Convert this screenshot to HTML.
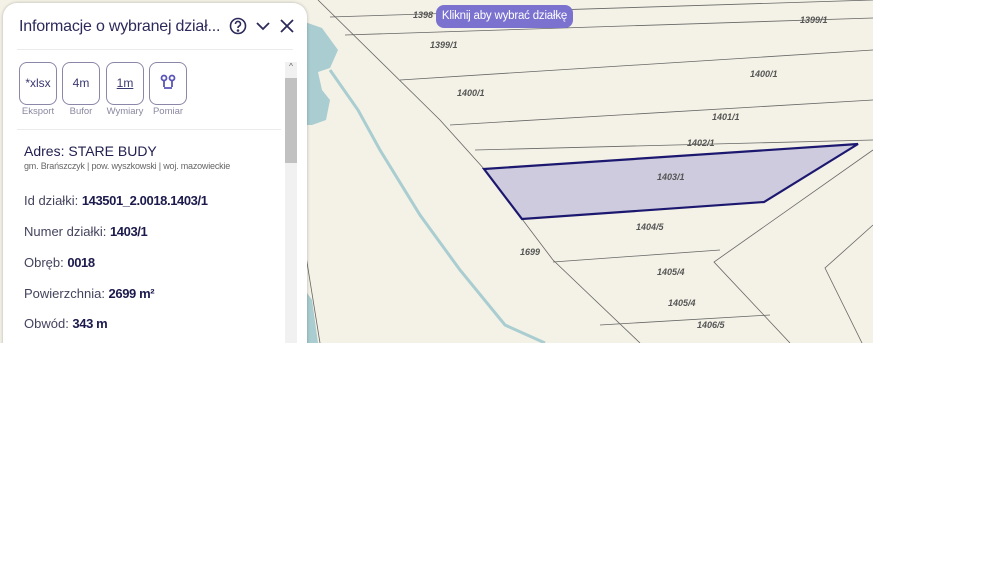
<!DOCTYPE html>
<html><head><meta charset="utf-8"><style>
body{margin:0;width:1000px;height:563px;background:#fff;overflow:hidden;font-family:"Liberation Sans",sans-serif;position:relative}
#map{position:absolute;left:0;top:0;width:873px;height:343px;background:#f4f2e6;overflow:hidden}
#panel{position:absolute;left:3px;top:3px;width:304px;height:345px;background:#fff;border-radius:14px 14px 0 0;box-shadow:0 0 3px rgba(0,0,0,.25);color:#2c2a5a}
.t{position:absolute;left:16px;top:15px;font-size:16px;color:#2c2a5a;letter-spacing:-0.2px;white-space:nowrap}
.btn{position:absolute;top:59px;width:36px;height:41px;border:1px solid #8a87a8;border-radius:8px;font-size:12px;text-align:center;line-height:41px;color:#3a3870}
.lbl{position:absolute;top:103px;font-size:9.5px;color:#8a88a0;width:50px;text-align:center}
.row{position:absolute;left:21px;font-size:13px;color:#44435e;white-space:nowrap}
.row b{color:#1c1a4c;font-weight:600;letter-spacing:-0.4px}
</style></head><body>
<div id="map">
<svg width="873" height="343" viewBox="0 0 873 343">
<path d="M305 22 L322 28 L338 50 L330 68 L318 72 L322 90 L330 100 L326 120 L312 125 L305 125 Z" fill="#a9cdd0"/>
<path d="M305 290 L312 300 L318 343 L305 343 Z" fill="#a9cdd0"/>
<path d="M330 70 L358 110 L380 150 L420 215 L460 270 L505 325 L545 343" fill="none" stroke="#a9cdd0" stroke-width="3"/>
<g stroke="#666" stroke-width="0.8" fill="none">
<path d="M318 0 L440 120 L485 170 L522 219 L553 260 L640 343"/>
<path d="M330 17 L873 0"/><path d="M345 35 L873 18"/>
<path d="M400 80 L873 50"/><path d="M450 125 L873 100"/><path d="M475 150 L873 140"/>
<path d="M553 262 L720 250"/><path d="M600 325 L770 315"/>
<path d="M873 150 L714 262 L790 343"/><path d="M873 225 L825 268 L862 343"/>
<path d="M305 250 L320 343"/>
</g>
<polygon points="484,169 858,144 764,202 522,219" fill="#cdcbdd" stroke="#1c1870" stroke-width="2.2"/>
<g font-size="9" font-style="italic" font-weight="bold" fill="#555">
<text x="413" y="18">1398</text><text x="430" y="48">1399/1</text><text x="800" y="23">1399/1</text>
<text x="457" y="96">1400/1</text><text x="750" y="77">1400/1</text><text x="712" y="120">1401/1</text>
<text x="687" y="146">1402/1</text><text x="657" y="180">1403/1</text><text x="636" y="230">1404/5</text>
<text x="520" y="255">1699</text><text x="657" y="275">1405/4</text><text x="668" y="306">1405/4</text><text x="697" y="328">1406/5</text>
</g>
</svg>
<div style="position:absolute;left:436px;top:5px;width:137px;height:23px;border-radius:8px;background:#7b72d0;color:#fff;font-size:11.5px;line-height:23px;text-align:center;white-space:nowrap;letter-spacing:-0.2px">Kliknij aby wybrać działkę</div>
</div>
<div id="panel">
<div class="t">Informacje o wybranej dział...</div>
<svg style="position:absolute;left:226px;top:14px" width="18" height="18" viewBox="0 0 18 18" fill="none" stroke="#2c2a5a" stroke-width="1.6"><circle cx="9" cy="9" r="7.5"/><path d="M6.5 7a2.5 2.5 0 1 1 3.5 2.2c-.8.4-1 .9-1 1.8"/><circle cx="9" cy="13.5" r=".5" fill="#2c2a5a"/></svg>
<svg style="position:absolute;left:253px;top:18px" width="14" height="10" viewBox="0 0 14 10" fill="none" stroke="#2c2a5a" stroke-width="1.8"><path d="M1 2l6 6 6-6"/></svg>
<svg style="position:absolute;left:277px;top:16px" width="14" height="14" viewBox="0 0 14 14" fill="none" stroke="#2c2a5a" stroke-width="1.8"><path d="M1 1l12 12M13 1L1 13"/></svg>
<div style="position:absolute;left:14px;right:14px;top:46px;border-top:1px solid #ebebeb"></div>
<div class="btn" style="left:16px">*xlsx</div>
<div class="btn" style="left:59px">4m</div>
<div class="btn" style="left:103px"><span style="text-decoration:underline">1m</span></div>
<div class="btn" style="left:146px"><svg width="16" height="18" viewBox="0 0 16 18" style="margin-top:11px" fill="none" stroke="#5a54b8" stroke-width="1.8"><circle cx="4" cy="4" r="2.5"/><circle cx="12" cy="4" r="2.5"/><path d="M4 7v6M12 7v6M4 14h8"/></svg></div>
<div class="lbl" style="left:10px">Eksport</div><div class="lbl" style="left:53px">Bufor</div><div class="lbl" style="left:97px">Wymiary</div><div class="lbl" style="left:140px">Pomiar</div>
<div style="position:absolute;left:14px;right:26px;top:126px;border-top:1px solid #ebebeb"></div>
<div style="position:absolute;left:282px;top:59px;width:12px;height:290px;background:#f1f1f1"><div style="font-size:8px;text-align:center;color:#555">^</div><div style="position:absolute;top:16px;width:12px;height:85px;background:#c1c1c1"></div></div>
<div class="row" style="top:140px;font-size:14px;color:#222050">Adres: STARE BUDY</div>
<div class="row" style="top:158px;font-size:9px;color:#666;letter-spacing:-0.2px">gm. Brańszczyk | pow. wyszkowski | woj. mazowieckie</div>
<div class="row" style="top:190px">Id działki: <b>143501_2.0018.1403/1</b></div>
<div class="row" style="top:221px">Numer działki: <b>1403/1</b></div>
<div class="row" style="top:252px">Obręb: <b>0018</b></div>
<div class="row" style="top:283px">Powierzchnia: <b>2699 m²</b></div>
<div class="row" style="top:313px">Obwód: <b>343 m</b></div>
</div>
<div style="position:absolute;left:0;top:343px;width:1000px;height:220px;background:#fff"></div>
</body></html>
